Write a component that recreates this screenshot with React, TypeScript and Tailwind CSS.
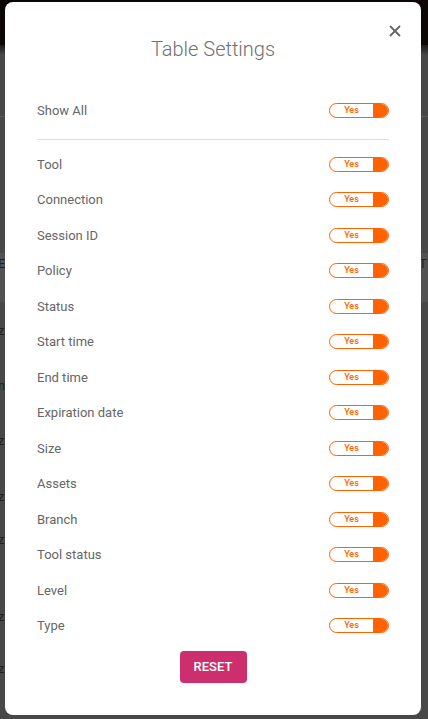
import { X } from 'lucide-react'

const columns = [
  'Tool',
  'Connection',
  'Session ID',
  'Policy',
  'Status',
  'Start time',
  'End time',
  'Expiration date',
  'Size',
  'Assets',
  'Branch',
  'Tool status',
  'Level',
  'Type',
]

// bits of the page behind the dialog that peek out on the left edge
const edgeGlyphs = [
  { top: 257, text: 'E' },
  { top: 324, text: 'z' },
  { top: 379, text: 'n(' },
  { top: 434, text: 'z' },
  { top: 490, text: 'z' },
  { top: 533, text: 'z' },
  { top: 610, text: 'z' },
  { top: 662, text: 'z' },
]

function Toggle() {
  return (
    <div className="flex h-[15px] w-[60px] overflow-hidden rounded-full border border-[#ff6200] bg-white">
      <div className="flex flex-1 items-center justify-center text-[9px] font-medium leading-none text-[#ff6200]">
        Yes
      </div>
      <div className="w-[15px] bg-[#ff6200]" />
    </div>
  )
}

function Row({ label }: { label: string }) {
  return (
    <div className="flex h-[35.5px] items-center justify-between">
      <span className="text-[13px] text-[#666]">{label}</span>
      <Toggle />
    </div>
  )
}

export default function App() {
  return (
    <div
      className="relative h-[719px] w-[428px] overflow-hidden bg-[#474847]"
      style={{ fontFamily: 'Roboto, "Liberation Sans", sans-serif' }}
    >
      {/* dimmed page behind */}
      <div className="h-[45px] bg-[#0d0706]" />
      <div className="h-[10px] bg-gradient-to-b from-[#1e1b1a] to-[#474847]" />
      <div className="mt-[61px] h-px bg-[#5b5b5b]" />
      <div className="mt-[136px] h-[49px] bg-[#515251]" />
      {edgeGlyphs.map((g) => (
        <span
          key={g.top}
          className="absolute left-[-2px] text-[13px] leading-none text-[#1f1f1f]"
          style={{ top: g.top }}
        >
          {g.text}
        </span>
      ))}
      <span className="absolute left-[419px] top-[257px] text-[13px] leading-none text-[#1f2430]">T</span>

      {/* dialog */}
      <div className="absolute left-[5px] top-[2px] h-[713px] w-[416px] rounded-lg bg-white px-8 pt-[33px] pb-8">
        <button className="absolute right-[17px] top-[20px] text-[#666]">
          <X size={18} strokeWidth={2.4} />
        </button>
        <h2 className="text-center text-[20px] font-light leading-7 text-[#707070]">Table Settings</h2>

        <div className="mt-[30px]">
          <Row label="Show All" />
        </div>
        <div className="mt-[10px] h-px bg-[#dcdcdc]" />
        <div className="mt-[7px]">
          {columns.map((c) => (
            <Row key={c} label={c} />
          ))}
        </div>

        <div className="mt-[7px] flex justify-center">
          <button className="h-8 w-[67px] rounded-sm bg-[#cd2f6e] text-[13px] font-medium text-white">
            RESET
          </button>
        </div>
      </div>
    </div>
  )
}
